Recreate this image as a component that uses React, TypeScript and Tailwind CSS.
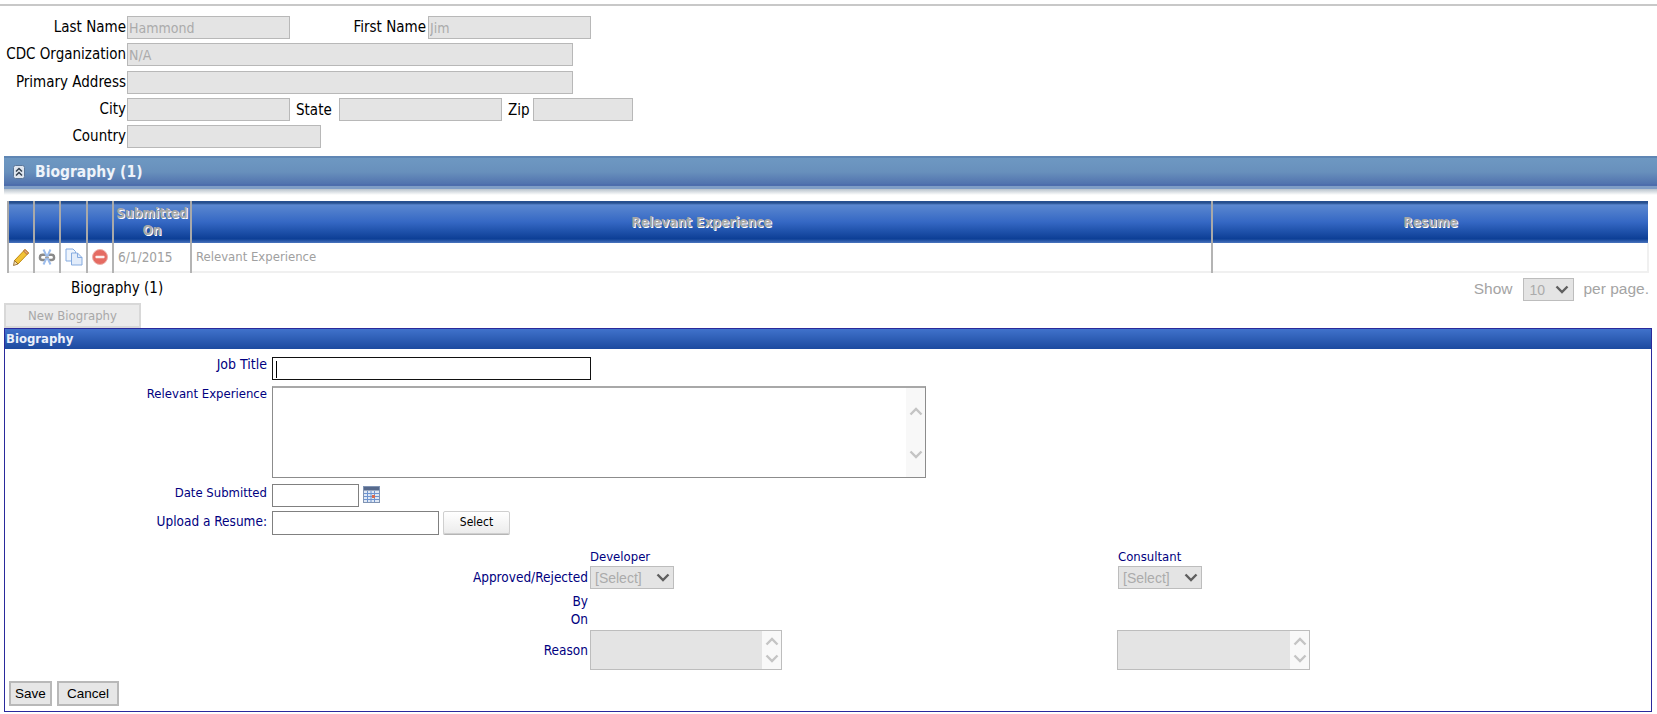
import { ReactNode } from 'react';

const font = "font-['DejaVu_Sans_Condensed','DejaVu_Sans',sans-serif]";
const disabledInput = 'h-[23px] border border-[#b8b8b8] bg-[#e4e4e4] px-[1px] text-[14px] text-[#ababab] outline-none';
const thCls = "border-x-2 border-[#a9a9a9] align-middle text-center text-[13.5px] leading-[17px] font-bold text-[#a8a8a8] [text-shadow:1px_1px_0_#ffffff]";
const tdCls = 'border-x-2 border-[#b4b4b4] text-center align-middle';
const topLabel = 'w-[126px] pt-[3px] text-right leading-[17px]';

function Pencil() {
  return (
    <svg width="18" height="19" viewBox="0 0 18 19" className="mx-auto">
      <path d="M13 1.5 16.5 5 6 16 2.5 12.5Z" fill="#f2c235" stroke="#c08a10" strokeWidth="1" />
      <path d="M13 1.5 16.5 5 15 6.5 11.5 3Z" fill="#eda878" stroke="#b07030" strokeWidth="1" />
      <path d="M2.5 12.5 6 16 1.5 17.5Z" fill="#f4dfb0" stroke="#8a6020" strokeWidth="0.8" />
    </svg>
  );
}

function Unlink() {
  return (
    <svg width="18" height="18" viewBox="0 0 18 18" className="mx-auto">
      <path d="M8 6.8H4.5a2.6 2.6 0 0 0 0 5.2H8" fill="none" stroke="#8a8a8a" strokeWidth="2.4" />
      <path d="M10 6.8h3.5a2.6 2.6 0 0 1 0 5.2H10" fill="none" stroke="#8a8a8a" strokeWidth="2.4" />
      <path d="M5.5 1.5 12.5 16.5M12.5 1.5 5.5 16.5" stroke="#9dbdec" strokeWidth="2" />
      <path d="M7 9.4H11" stroke="#a4a4a4" strokeWidth="1.4" />
    </svg>
  );
}

function CopyDocs() {
  return (
    <svg width="18" height="18" viewBox="0 0 18 18" className="mx-auto">
      <path d="M1 1H8L10.5 3.5V13H1Z" fill="#eef4fc" stroke="#85abe0" />
      <path d="M6.5 5H12.5L17 9.5V17H6.5Z" fill="#e2ecfa" stroke="#85abe0" />
      <path d="M12.5 5V9.5H17" fill="none" stroke="#85abe0" />
    </svg>
  );
}

function RemoveIcon() {
  return (
    <svg width="18" height="18" viewBox="0 0 18 18" className="mx-auto">
      <circle cx="9" cy="9" r="7.5" fill="#e56b62" stroke="#ecb0aa" />
      <rect x="4.5" y="7.8" width="9" height="2.4" rx="0.6" fill="#fdeeec" />
    </svg>
  );
}

function CalendarIcon() {
  return (
    <svg width="17" height="17" viewBox="0 0 17 17" className="ml-[4px] mt-[2px]">
      <rect x="0.5" y="0.5" width="16" height="16" fill="#dfe8f5" stroke="#8094b4" />
      <rect x="1" y="1" width="15" height="3.5" fill="#56698c" />
      <path d="M1 7.5H16M1 10.5H16M1 13.5H16M4.5 5V16M8 5V16M11.5 5V16" stroke="#6f94cf" strokeWidth="1" />
      <rect x="9" y="9" width="3" height="3" fill="#d96a50" />
    </svg>
  );
}

function Chevron({ dark }: { dark?: boolean }) {
  return (
    <svg width="14" height="9" viewBox="0 0 14 9" className="block">
      <path d="M1.5 1.5 7 7l5.5-5.5" fill="none" stroke={dark ? '#5f5f5f' : '#c4c4c4'} strokeWidth="2.4" />
    </svg>
  );
}

function ChevronUp() {
  return (
    <svg width="14" height="9" viewBox="0 0 14 9" className="block">
      <path d="M1.5 7.5 7 2l5.5 5.5" fill="none" stroke="#c4c4c4" strokeWidth="2.4" />
    </svg>
  );
}

function FakeSelect({ value, width, textCls }: { value: string; width: string; textCls: string }) {
  return (
    <div className={`relative h-[23px] border border-[#bdbdbd] bg-[#e4e4e4] ${width}`}>
      <select disabled className={`h-full w-full appearance-none bg-transparent pl-[4px] font-['Liberation_Sans',sans-serif] text-[14px] ${textCls} outline-none`}>
        <option>{value}</option>
      </select>
      <span className="absolute right-[3px] top-[6px]">
        <Chevron dark />
      </span>
    </div>
  );
}

function ScrollArea({ width, height, gap, disabled }: { width: string; height: string; gap: string; disabled?: boolean }) {
  return (
    <div className={`relative ${width} ${height} ${disabled ? 'border border-[#bdbdbd] bg-[#e4e4e4]' : 'border border-[#8c8c8c] border-t-2 border-t-[#a8a8a8] bg-white'}`}>
      <textarea disabled={disabled} className="block h-full w-full resize-none overflow-hidden bg-transparent outline-none" />
      <div className={`absolute inset-y-0 right-0 flex w-[19px] flex-col items-center justify-center bg-[#f8f8f8] ${gap}`}>
        <ChevronUp />
        <Chevron />
      </div>
    </div>
  );
}

function FieldRow({ label, labelCls, children, cls }: { label: string; labelCls: string; children: ReactNode; cls: string }) {
  return (
    <div className={`flex ${cls}`}>
      <div className={`w-[262px] text-right text-[#000080] ${labelCls}`}>{label}</div>
      <div className="ml-[5px] flex">{children}</div>
    </div>
  );
}

export default function App() {
  return (
    <div className={`h-[714px] w-full overflow-hidden bg-white ${font} text-[15px] text-black`}>
      <div className="mt-[4px] h-[2px] bg-[#c8c8c8]" />

      {/* person block */}
      <div className="pt-[10px]">
        <div className="flex h-[27px] items-start">
          <label className={topLabel}>Last Name</label>
          <input disabled value="Hammond" readOnly className={`ml-[1px] w-[163px] ${disabledInput}`} />
          <label className="w-[136px] pt-[3px] text-right leading-[17px]">First Name</label>
          <input disabled value="Jim" readOnly className={`ml-[2px] w-[163px] ${disabledInput}`} />
        </div>
        <div className="flex h-[28px] items-start">
          <label className={topLabel}>CDC Organization</label>
          <input disabled value="N/A" readOnly className={`ml-[1px] w-[446px] ${disabledInput}`} />
        </div>
        <div className="flex h-[27px] items-start">
          <label className={topLabel}>Primary Address</label>
          <input disabled className={`ml-[1px] w-[446px] ${disabledInput}`} />
        </div>
        <div className="flex h-[27px] items-start">
          <label className={topLabel}>City</label>
          <input disabled className={`ml-[1px] w-[163px] ${disabledInput}`} />
          <label className="ml-[6px] w-[39px] pt-[4px] leading-[17px]">State</label>
          <input disabled className={`ml-[4px] w-[163px] ${disabledInput}`} />
          <label className="ml-[6px] w-[21px] pt-[4px] leading-[17px]">Zip</label>
          <input disabled className={`ml-[4px] w-[100px] ${disabledInput}`} />
        </div>
        <div className="flex h-[27px] items-start">
          <label className={topLabel}>Country</label>
          <input disabled className={`ml-[1px] w-[194px] ${disabledInput}`} />
        </div>
      </div>

      {/* section bar */}
      <div className="ml-[4px] mt-[4px] h-[33px] border-t-2 border-[#5f86b4] bg-[linear-gradient(to_bottom,#6e98c2,#6890bc_45%,#4766a8)] shadow-[inset_0_-3px_0_#7f9dc6,inset_0_-5px_0_#4d6dac]">
        <div className="flex h-[28px] items-center pl-[9px]">
          <svg width="12" height="14" viewBox="0 0 12 14">
            <rect x="0.5" y="0.5" width="11" height="13" rx="2" fill="#dfe6ef" stroke="#5a7698" />
            <path d="M3 6.5 6 3.5l3 3M3 10.5 6 7.5l3 3" fill="none" stroke="#33404f" strokeWidth="1.5" />
          </svg>
          <span className="ml-[10px] text-[15.5px] font-bold leading-[18px] text-[#eef3fa]">Biography (1)</span>
        </div>
      </div>
      <div className="ml-[4px] h-[6px] bg-[linear-gradient(to_bottom,#b8c2cc,#ffffff)]" />

      {/* grid */}
      <div className="ml-[7px] mt-[6px] w-[1642px]">
        <table className="w-full table-fixed border-collapse">
          <colgroup>
            <col className="w-[26px]" />
            <col className="w-[26px]" />
            <col className="w-[27px]" />
            <col className="w-[26px]" />
            <col className="w-[78px]" />
            <col className="w-[1021px]" />
            <col />
          </colgroup>
          <thead>
            <tr className="h-[42px] bg-[linear-gradient(to_bottom,#264f8f_0,#264f8f_2px,#5a87d0_4px,#3568c4_50%,#0d3f96_90%,#4a74bd_100%)]">
              <th className={thCls} />
              <th className={thCls} />
              <th className={thCls} />
              <th className={thCls} />
              <th className={thCls}>Submitted On</th>
              <th className={thCls}>Relevant Experience</th>
              <th className={`${thCls} border-r-0`}>Resume</th>
            </tr>
          </thead>
          <tbody>
            <tr className="h-[29px] border-b-2 border-[#f0f0f0] text-[#a0a0a0]">
              <td className={tdCls}><Pencil /></td>
              <td className={tdCls}><Unlink /></td>
              <td className={tdCls}><CopyDocs /></td>
              <td className={tdCls}><RemoveIcon /></td>
              <td className={`${tdCls} pl-[4px] text-left text-[13.5px]`}>6/1/2015</td>
              <td className={`${tdCls} pl-[4px] text-left text-[13px]`}>Relevant Experience</td>
              <td className={`${tdCls} border-r-2 border-r-[#f0f0f0]`} />
            </tr>
          </tbody>
        </table>
      </div>

      {/* pager */}
      <div className="flex h-[30px] items-center justify-between pl-[71px] pr-[8px]">
        <span className="pt-[1px]">Biography (1)</span>
        <div className="flex items-center pt-[2px] font-['Liberation_Sans',sans-serif] text-[15.5px] text-[#a4a4a4]">
          <span>Show</span>
          <div className="relative ml-[10px] h-[23px] w-[51px] border border-[#bdbdbd] bg-[#e4e4e4]">
            <span className="absolute left-[6px] top-[1px] text-[14px] text-[#ababab]">10</span>
            <span className="absolute right-[4px] top-[6px]">
              <Chevron dark />
            </span>
          </div>
          <span className="ml-[10px]">per page.</span>
        </div>
      </div>

      <div className="ml-[4px] h-[25px] w-[137px] border-2 border-[#d8d8d8] bg-[#ebebeb] text-center text-[13px] leading-[21px] text-[#a8a8a8]">
        New Biography
      </div>

      {/* edit panel */}
      <div className="ml-[4px] h-[384px] w-[1648px] border border-[#2a2a9c]">
        <div className="h-[20px] bg-[linear-gradient(to_bottom,#4072cb,#1c4a9f)] pl-[1px] text-[13px] font-bold leading-[20px] text-[#eaf0fa]">
          Biography
        </div>

        <FieldRow label="Job Title" labelCls="text-[14px] leading-[15px]" cls="mt-[8px] h-[29px]">
          <div className="h-[23px] w-[319px] border border-[#111111] pl-[3px] pt-[3px]">
            <div className="h-[17px] w-[1px] bg-black" />
          </div>
        </FieldRow>
        <FieldRow label="Relevant Experience" labelCls="text-[13px] leading-[15px]" cls="h-[98px]">
          <ScrollArea width="w-[654px]" height="h-[92px]" gap="gap-[34px]" />
        </FieldRow>
        <FieldRow label="Date Submitted" labelCls="text-[13px] leading-[17px]" cls="h-[27px]">
          <div className="h-[23px] w-[87px] border border-[#808080]" />
          <CalendarIcon />
        </FieldRow>
        <FieldRow label="Upload a Resume:" labelCls="pt-[2px] text-[13.5px] leading-[17px]" cls="h-[37px]">
          <div className="h-[24px] w-[167px] border border-[#808080]" />
          <div className="ml-[4px] h-[23px] w-[67px] rounded-[2px] border border-[#cfcfcf] bg-[linear-gradient(to_bottom,#ffffff,#ececec)] text-center text-[12px] leading-[21px] shadow-[0_1px_0_#b5b5b5]">
            Select
          </div>
        </FieldRow>

        {/* approvals */}
        <div className="grid grid-cols-[583px_530px_auto] text-[13.5px] leading-[18px] text-[#000080]">
          <div />
          <div className="pl-[2px] text-[13px]">Developer</div>
          <div className="text-[13px]">Consultant</div>

          <div className="text-right leading-[23px]">Approved/Rejected</div>
          <div className="pl-[2px]">
            <FakeSelect value="[Select]" width="w-[84px]" textCls="text-[#ababab]" />
          </div>
          <div>
            <FakeSelect value="[Select]" width="w-[84px]" textCls="text-[#ababab]" />
          </div>

          <div className="mt-[3px] text-right">By</div>
          <div />
          <div />

          <div className="text-right">On</div>
          <div />
          <div />

          <div className="mt-[2px] flex h-[40px] items-center justify-end">Reason</div>
          <div className="mt-[2px] pl-[2px]">
            <ScrollArea width="w-[192px]" height="h-[40px]" gap="gap-[8px]" disabled />
          </div>
          <div className="ml-[-1px] mt-[2px]">
            <ScrollArea width="w-[193px]" height="h-[40px]" gap="gap-[8px]" disabled />
          </div>
        </div>

        <div className="mt-[11px] flex gap-[5px] pl-[4px] font-['Liberation_Sans',sans-serif] text-[13.5px]">
          <div className="h-[25px] w-[43px] border-2 border-[#b8b8b8] bg-[#e6e6e6] text-center leading-[21px]">Save</div>
          <div className="h-[25px] w-[62px] border-2 border-[#b8b8b8] bg-[#e6e6e6] text-center leading-[21px]">Cancel</div>
        </div>
      </div>
    </div>
  );
}
